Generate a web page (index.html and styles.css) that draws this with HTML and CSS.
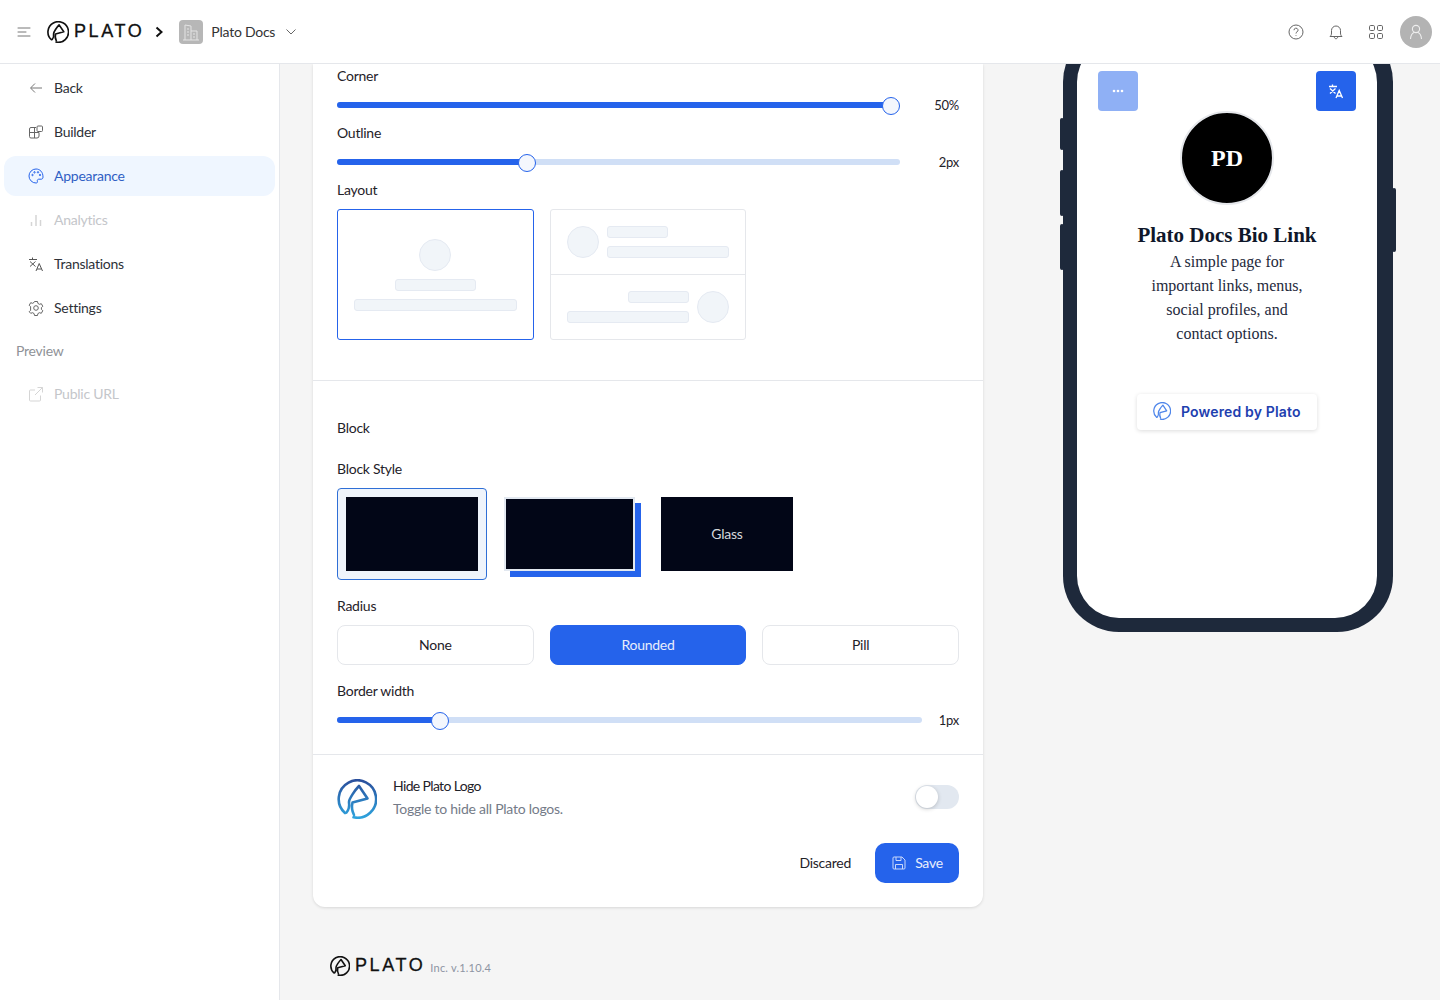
FILE: index.html
```html
<!DOCTYPE html>
<html lang="en">
<head>
  <meta charset="UTF-8">
  <meta name="viewport" content="width=device-width, initial-scale=1.0">
  <title>Plato Docs - Appearance</title>
  <link rel="stylesheet" href="styles.css">
</head>
<body>
  <header class="topbar">
    <svg class="menu-icon" width="14" height="12" viewBox="0 0 14 12" fill="none" stroke="#777" stroke-width="1" stroke-linecap="round"><path d="M1 2h12M1 6h8M1 10h12"/></svg>
    <div class="logo">
      <svg width="22" height="22" viewBox="0 0 40 40" fill="none" stroke="#111" stroke-width="3" stroke-linecap="round" stroke-linejoin="round"><path d="M8 34A18.700 18.700 0 1 1 16.500 38.300"/><path d="M9.500 33.500c2.500-3 3-7 2.500-10.500 0-3 6-12 10-16l8.500 12.500-15 4c-1 4-.5 8.500 1.500 12.500"/></svg>
      <span class="logo-text">PLATO</span>
    </div>
    <svg class="crumb-arrow" width="8" height="12" viewBox="0 0 8 12" fill="none" stroke="#111" stroke-width="2"><path d="M1.500 1.500 6.500 6l-5 4.500"/></svg>
    <div class="org-tile">
      <svg width="16" height="18" viewBox="0 0 16 18" fill="none" stroke="#e4e4e4" stroke-width="1"><path d="M2 17V2l6 1v14M8 8h6v9M0 17h16M4 6h2M4 9h2M4 12h2M10 11h2M10 14h2"/></svg>
    </div>
    <span class="org-name">Plato Docs</span>
    <svg class="org-caret" width="12" height="8" viewBox="0 0 12 8" fill="none" stroke="#666" stroke-width="1"><path d="m1.500 1.500 4.500 4.500 4.500-4.500"/></svg>
    <div class="topbar-right">
      <svg width="16" height="16" viewBox="0 0 16 16" fill="none" stroke="#666" stroke-width="1"><circle cx="8" cy="8" r="7"/><path d="M6 6.200a2 2 0 1 1 3 1.700c-.7.400-1 .8-1 1.600M8 11.300v.7"/></svg>
      <svg width="16" height="16" viewBox="0 0 16 16" fill="none" stroke="#666" stroke-width="1" stroke-linejoin="round"><path d="M2 12.500c1-1 1.500-1.500 1.500-3.500V6.500a4.500 4.500 0 0 1 9 0V9c0 2 .5 2.500 1.500 3.500zM6.300 13c.2 2.300 3.200 2.300 3.400 0"/></svg>
      <svg width="16" height="16" viewBox="0 0 16 16" fill="none" stroke="#666" stroke-width="1"><rect x="1.500" y="1.500" width="5" height="5" rx="1.200"/><rect x="9.500" y="1.500" width="5" height="5" rx="1.200"/><rect x="1.500" y="9.500" width="5" height="5" rx="1.200"/><rect x="9.500" y="9.500" width="5" height="5" rx="1.200"/></svg>
      <div class="avatar">
        <svg width="16" height="16" viewBox="0 0 16 16" fill="none" stroke="#eee" stroke-width="1.100"><circle cx="8" cy="5" r="3.600"/><path d="M2.500 15c.3-4 2.300-6 3.500-6.500M13.500 15c-.3-4-2.300-6-3.500-6.500"/></svg>
      </div>
    </div>
  </header>

  <div class="layout">
    <aside class="sidebar">
      <a class="nav-item">
        <svg width="16" height="16" viewBox="0 0 16 16" fill="none" stroke="#777" stroke-width="1"><path d="M14 8H3M7 3.500 2.500 8 7 12.500"/></svg>
        Back
      </a>
      <a class="nav-item">
        <svg width="16" height="16" viewBox="0 0 16 16" fill="none" stroke="#666" stroke-width="1"><path d="M8 3.500H3A1.500 1.500 0 0 0 1.500 5v7.500A1.500 1.500 0 0 0 3 14h6a2 2 0 0 0 2-2V8.500M1.500 8.500H11M6.500 3.500V14"/><rect x="9" y="2" width="5.500" height="5.500" rx="1"/></svg>
        Builder
      </a>
      <a class="nav-item active">
        <svg width="16" height="16" viewBox="0 0 16 16" fill="none" stroke="#2563eb" stroke-width="1"><path d="M8 1a7 7 0 1 0 0 14c1.300 0 1.700-.8 1.400-1.700-.4-1.100.2-2.100 1.300-2.100h2.600c1 0 1.700-.8 1.700-2.200C15 4 11.900 1 8 1z"/><circle cx="4.500" cy="7" r=".7"/><circle cx="6.500" cy="4.300" r=".7"/><circle cx="10" cy="4.300" r=".7"/><circle cx="12" cy="7" r=".7"/></svg>
        Appearance
      </a>
      <a class="nav-item disabled">
        <svg width="16" height="16" viewBox="0 0 16 16" fill="none" stroke="#d5d5d5" stroke-width="1.500"><path d="M3.500 14V10M8 14V3M12.500 14V8"/></svg>
        Analytics
      </a>
      <a class="nav-item">
        <svg width="16" height="16" viewBox="0 0 16 16" fill="none" stroke="#555" stroke-width="1"><path d="M1 3.500h8M4.500 1.500v2M2 5.500l5.500 5M7.500 5.500l-5.500 5M8 15l3.200-7.500L14.500 15M9 13h4.500"/></svg>
        Translations
      </a>
      <a class="nav-item">
        <svg width="16" height="16" viewBox="0 0 16 16" fill="none" stroke="#666" stroke-width="1" stroke-linejoin="round"><path d="M6.500 1.500h3l.4 1.900 1.500.9 1.900-.6 1.500 2.600-1.400 1.300v1.800l1.400 1.300-1.500 2.600-1.900-.6-1.500.9-.4 1.900h-3l-.4-1.900-1.500-.9-1.900.6L1.200 11.700l1.400-1.300V6.600L1.200 5.300l1.500-2.600 1.900.6 1.500-.9z"/><circle cx="8" cy="8" r="2.300"/></svg>
        Settings
      </a>
      <div class="nav-heading">Preview</div>
      <a class="nav-item disabled">
        <svg width="16" height="16" viewBox="0 0 16 16" fill="none" stroke="#d5d5d5" stroke-width="1"><path d="M12.500 9.500V14a1 1 0 0 1-1 1H2.500a1 1 0 0 1-1-1V5a1 1 0 0 1 1-1h4.500M9.500 1.500h5v5M14.500 1.500 7 9"/></svg>
        Public URL
      </a>
    </aside>

    <main class="content">
      <div class="column">
        <section class="card">
          <div class="card-section section-top">
            <div class="field-label">Corner</div>
            <div class="slider-row">
              <div class="track"><div class="track-fill" style="width: 98.400%"></div></div>
              <span class="slider-value">50%</span>
            </div>
            <div class="field-label">Outline</div>
            <div class="slider-row">
              <div class="track"><div class="track-fill" style="width: 33.800%"></div></div>
              <span class="slider-value">2px</span>
            </div>
            <div class="field-label">Layout</div>
            <div class="three-up">
              <div class="layout-tile selected">
                <div class="center-preview">
                  <div class="ghost-circle"></div>
                  <div class="ghost-bar short"></div>
                  <div class="ghost-bar long"></div>
                </div>
              </div>
              <div class="layout-tile split">
                <div class="split-row">
                  <div class="ghost-circle"></div>
                  <div class="ghost-lines">
                    <div class="ghost-bar half"></div>
                    <div class="ghost-bar"></div>
                  </div>
                </div>
                <div class="split-row reverse">
                  <div class="ghost-lines end">
                    <div class="ghost-bar half"></div>
                    <div class="ghost-bar"></div>
                  </div>
                  <div class="ghost-circle"></div>
                </div>
              </div>
            </div>
          </div>

          <div class="card-section section-block">
            <div class="section-title">Block</div>
            <div class="field-label style-label">Block Style</div>
            <div class="block-styles">
              <div class="block-option selected"><div class="block-sample"></div></div>
              <div class="block-option offset"><div class="block-sample hard-shadow"></div></div>
              <div class="block-option"><div class="block-sample">Glass</div></div>
            </div>
            <div class="field-label">Radius</div>
            <div class="three-up">
              <button class="radius-btn">None</button>
              <button class="radius-btn active">Rounded</button>
              <button class="radius-btn">Pill</button>
            </div>
            <div class="field-label">Border width</div>
            <div class="slider-row wide">
              <div class="track"><div class="track-fill" style="width: 17.600%"></div></div>
              <span class="slider-value">1px</span>
            </div>
          </div>

          <div class="card-section section-foot">
            <div class="hide-row">
              <svg class="hide-logo" width="40" height="40" viewBox="0 0 40 40" fill="none" stroke="url(#plato-grad)" stroke-width="2.600" stroke-linecap="round" stroke-linejoin="round">
                <defs>
                  <linearGradient id="plato-grad" gradientUnits="userSpaceOnUse" x1="20" y1="1" x2="20" y2="39">
                    <stop offset="0" stop-color="#2a4f9c"/>
                    <stop offset="1" stop-color="#2ea3dd"/>
                  </linearGradient>
                </defs>
                <path d="M8 34A18.700 18.700 0 1 1 16.500 38.300"/>
                <path d="M9.500 33.500c2.500-3 3-7 2.500-10.500 0-3 6-12 10-16l8.500 12.500-15 4c-1 4-.5 8.500 1.500 12.500"/>
              </svg>
              <div class="hide-text">
                <div class="hide-title">Hide Plato Logo</div>
                <div class="hide-sub">Toggle to hide all Plato logos.</div>
              </div>
              <div class="toggle"><div class="toggle-knob"></div></div>
            </div>
            <div class="actions">
              <button class="discard-btn">Discared</button>
              <button class="save-btn">
                <svg width="16" height="16" viewBox="0 0 16 16" fill="none" stroke="#c9d8fa" stroke-width="1"><path d="M2 3a1 1 0 0 1 1-1h8l3 3v8a1 1 0 0 1-1 1H3a1 1 0 0 1-1-1z"/><path d="M5 2v3.500h5V2M4.500 14V9.500h7V14"/></svg>
                Save
              </button>
            </div>
          </div>
        </section>

        <footer class="page-foot">
          <div class="logo small">
            <svg width="20" height="20" viewBox="0 0 40 40" fill="none" stroke="#111" stroke-width="3.200" stroke-linecap="round" stroke-linejoin="round"><path d="M8 34A18.700 18.700 0 1 1 16.500 38.300"/><path d="M9.500 33.500c2.500-3 3-7 2.500-10.500 0-3 6-12 10-16l8.500 12.500-15 4c-1 4-.5 8.500 1.500 12.500"/></svg>
            <span class="logo-text">PLATO</span>
          </div>
          <span class="version">Inc. v.1.10.4</span>
        </footer>
      </div>

      <div class="phone">
        <span class="phone-key key-a"></span>
        <span class="phone-key key-b"></span>
        <span class="phone-key key-c"></span>
        <span class="phone-key key-d"></span>
        <div class="screen">
          <div class="screen-actions">
            <div class="screen-btn faded">
              <svg width="14" height="4" viewBox="0 0 14 4" fill="#fff"><circle cx="3" cy="2" r="1.300"/><circle cx="7" cy="2" r="1.300"/><circle cx="11" cy="2" r="1.300"/></svg>
            </div>
            <div class="screen-btn">
              <svg width="16" height="16" viewBox="0 0 16 16" fill="none" stroke="#fff" stroke-width="1.300"><path d="M1 3.500h8M4.500 1.500v2M2 5.500l5.500 5M7.500 5.500l-5.500 5M8 15l3.200-7.500L14.500 15M9 13h4.500"/></svg>
            </div>
          </div>
          <div class="bio-avatar">PD</div>
          <div class="bio-title">Plato Docs Bio Link</div>
          <p class="bio-text">A simple page for important links, menus, social profiles, and contact options.</p>
          <div class="powered">
            <svg width="18" height="18" viewBox="0 0 40 40" fill="none" stroke="#4f86ea" stroke-width="2.800" stroke-linecap="round" stroke-linejoin="round"><path d="M8 34A18.700 18.700 0 1 1 16.500 38.300"/><path d="M9.500 33.500c2.500-3 3-7 2.500-10.500 0-3 6-12 10-16l8.500 12.500-15 4c-1 4-.5 8.500 1.500 12.500"/></svg>
            Powered by Plato
          </div>
        </div>
      </div>
    </main>
  </div>
</body>
</html>
```

FILE: styles.css
```css
* {
  box-sizing: border-box;
}

body {
  margin: 0;
  height: 100vh;
  overflow: hidden;
  display: flex;
  flex-direction: column;
  font-family: Lato, Arial, sans-serif;
  font-size: 14px;
  letter-spacing: -0.25px;
  color: #1f2229;
  background-color: #f5f5f5;
}

.topbar {
  position: relative;
  z-index: 5;
  display: flex;
  align-items: center;
  flex: 0 0 64px;
  padding: 0 8px 0 17px;
  background: #ffffff;
  border-bottom: 1px solid #e5e7eb;
}

.logo {
  display: flex;
  align-items: center;
  color: #111111;
}

.topbar .logo {
  margin-left: 16px;
}

.logo-text {
  margin-left: 5px;
  font-family: "Liberation Sans", Arial, sans-serif;
  font-size: 18px;
  font-weight: 400;
  letter-spacing: 2.600px;
  -webkit-text-stroke: 0.3px #111111;
}

.crumb-arrow {
  margin-left: 11px;
}

.org-tile {
  display: flex;
  align-items: center;
  justify-content: center;
  width: 24px;
  height: 24px;
  margin-left: 16px;
  border-radius: 4px;
  background: #b7b7b7;
}

.org-name {
  margin-left: 8px;
  color: #333333;
}

.org-caret {
  margin-left: 10px;
}

.topbar-right {
  display: flex;
  align-items: center;
  gap: 24px;
  margin-left: auto;
}

.avatar {
  display: flex;
  align-items: center;
  justify-content: center;
  width: 32px;
  height: 32px;
  margin-left: -8px;
  border-radius: 50%;
  background: #b3b3b3;
}

.layout {
  display: flex;
  flex: 1;
  min-height: 0;
}

.sidebar {
  flex: 0 0 280px;
  padding-top: 4px;
  background: #ffffff;
  border-right: 1px solid #e5e7eb;
}

.nav-item {
  display: flex;
  align-items: center;
  gap: 10px;
  height: 40px;
  margin: 0 4px 4px;
  padding: 0 0 2px 24px;
  border-radius: 12px;
  color: #2e3138;
}

.nav-item svg {
  margin-top: 2px;
}

.nav-item.active {
  background: #eff6ff;
  color: #2f5fc4;
}

.nav-item.disabled {
  color: #c4c6ca;
}

.nav-heading {
  margin: 13px 0 13px 16px;
  line-height: 20px;
  color: #8f9297;
}

.content {
  display: flex;
  align-items: flex-start;
  flex: 1;
  min-width: 0;
  padding-left: 33px;
  overflow: hidden;
}

.column {
  flex: 0 0 670px;
}

.card {
  background: #ffffff;
  border-radius: 0 0 12px 12px;
  box-shadow: 0 1px 3px rgba(0, 0, 0, 0.12);
}

.card-section {
  padding: 0 24px;
  border-bottom: 1px solid #e5e7eb;
}

.section-top {
  padding-top: 2px;
  padding-bottom: 40px;
}

.section-block {
  padding-top: 37px;
  padding-bottom: 26px;
}

.section-foot {
  padding-top: 24px;
  padding-bottom: 24px;
  border-bottom: none;
}

.field-label,
.section-title {
  line-height: 20px;
}

.field-label {
  margin-top: 10px;
  margin-bottom: 9px;
}

.section-top .field-label:first-child {
  margin-top: 0;
}

.style-label {
  margin-top: 21px;
}

.section-block .three-up + .field-label,
.block-styles + .field-label {
  margin-top: 16px;
}

.slider-row {
  display: flex;
  align-items: center;
  height: 16px;
  margin-top: 11px;
}

.track {
  position: relative;
  flex: 1;
  height: 6px;
  border-radius: 3px;
  background: #d0dff6;
}

.track-fill {
  position: relative;
  height: 100%;
  border-radius: 3px;
  background: #2563eb;
}

.track-fill::after {
  content: "";
  position: absolute;
  top: -5px;
  right: -9px;
  width: 16px;
  height: 16px;
  border: 1px solid #2563eb;
  border-radius: 50%;
  background: #f4f7fd;
}

.slider-value {
  flex: 0 0 59px;
  text-align: right;
  font-size: 13px;
}

.wide .slider-value {
  flex-basis: 37px;
}

.three-up {
  display: grid;
  grid-template-columns: repeat(3, 1fr);
  gap: 16px;
}

.layout-tile {
  height: 131px;
  border: 1px solid #e5e7eb;
  border-radius: 3px;
}

.layout-tile.selected {
  border-color: #2563eb;
}

.center-preview {
  display: flex;
  flex-direction: column;
  align-items: center;
  justify-content: center;
  gap: 8px;
  height: 100%;
}

.ghost-circle {
  flex: 0 0 32px;
  width: 32px;
  height: 32px;
  border: 1px solid #e5eaf2;
  border-radius: 50%;
  background: #f1f5f9;
}

.ghost-bar {
  height: 12px;
  border: 1px solid #e5eaf2;
  border-radius: 3px;
  background: #f1f5f9;
}

.ghost-bar.short {
  width: 81px;
}

.ghost-bar.long {
  width: 163px;
}

.ghost-bar.half {
  width: 61px;
}

.split-row {
  display: flex;
  gap: 8px;
  height: 65px;
  padding: 16px;
}

.split-row:first-child {
  border-bottom: 1px solid #e5e7eb;
}

.ghost-lines {
  display: flex;
  flex-direction: column;
  gap: 8px;
  flex: 1;
}

.ghost-lines.end {
  align-items: flex-end;
}

.ghost-lines.end .ghost-bar {
  width: 122px;
}

.ghost-lines.end .ghost-bar.half {
  width: 61px;
}

.block-styles {
  display: flex;
  gap: 8px;
}

.block-option {
  flex: 0 0 150px;
  height: 92px;
  padding: 8px;
  border: 1px solid transparent;
  border-radius: 4px;
}

.block-option.offset {
  flex-basis: 149px;
}

.block-option.selected {
  border-color: #2f6fd6;
  background: #eff4fb;
}

.block-sample {
  display: flex;
  align-items: center;
  justify-content: center;
  height: 100%;
  padding-bottom: 2px;
  background: #020617;
  color: #d5d7dc;
}

.hard-shadow {
  border: 2px solid #e2e8f0;
  box-shadow: 6px 6px 0 #2563eb;
}

.radius-btn {
  height: 40px;
  padding: 0 0 2px;
  border: 1px solid #e5e7eb;
  border-radius: 8px;
  background: #ffffff;
  color: #1f2229;
  font: inherit;
  letter-spacing: inherit;
}

.radius-btn.active {
  border-color: #2563eb;
  background: #2563eb;
  color: #e8eefc;
}

.hide-row {
  display: flex;
  align-items: flex-start;
}

.hide-logo {
  flex: 0 0 40px;
}

.hide-text {
  flex: 1;
  margin-left: 16px;
}

.hide-title {
  margin-top: -3px;
  line-height: 20px;
  letter-spacing: -0.650px;
}

.hide-sub {
  margin-top: 3px;
  line-height: 20px;
  color: #747b88;
}

.toggle {
  position: relative;
  flex: 0 0 44px;
  height: 24px;
  margin-top: 6px;
  border-radius: 12px;
  background: #e2e8f0;
}

.toggle-knob {
  position: absolute;
  top: 1px;
  left: 1px;
  width: 22px;
  height: 22px;
  border-radius: 50%;
  background: #ffffff;
  box-shadow: 0 1px 4px rgba(0, 0, 0, 0.2);
}

.actions {
  display: flex;
  align-items: center;
  justify-content: flex-end;
  gap: 24px;
  margin-top: 24px;
}

.discard-btn {
  padding: 0 0 2px;
  border: none;
  background: none;
  color: #1f2229;
  font: inherit;
  letter-spacing: inherit;
}

.save-btn {
  display: flex;
  align-items: center;
  justify-content: center;
  gap: 8px;
  width: 84px;
  height: 40px;
  padding: 0 0 2px;
  border: none;
  border-radius: 10px;
  background: #2563eb;
  color: #e8eefc;
  font: inherit;
  letter-spacing: inherit;
}

.save-btn svg {
  margin-top: 2px;
}

.page-foot {
  display: flex;
  align-items: flex-end;
  gap: 5px;
  margin-top: 48px;
  padding-left: 17px;
}

.version {
  margin-bottom: 2px;
  font-size: 11px;
  letter-spacing: 0.2px;
  color: #8d94a3;
}

.phone {
  position: relative;
  flex: 0 0 330px;
  height: 606px;
  margin: -38px 0 0 80px;
  padding: 14px 16px 14px 14px;
  border-radius: 56px;
  background: #1e293b;
}

.phone-key {
  position: absolute;
  width: 4px;
  background: #1e293b;
  border-radius: 2px;
}

.key-a {
  top: 92px;
  left: -3px;
  height: 32px;
}

.key-b {
  top: 144px;
  left: -3px;
  height: 46px;
}

.key-c {
  top: 198px;
  left: -3px;
  height: 46px;
}

.key-d {
  top: 162px;
  right: -3px;
  height: 64px;
}

.screen {
  display: flex;
  flex-direction: column;
  align-items: center;
  height: 100%;
  padding-top: 31px;
  border-radius: 42px;
  background: #ffffff;
  font-family: "Liberation Serif", "Times New Roman", serif;
  letter-spacing: 0;
}

.screen-actions {
  display: flex;
  justify-content: space-between;
  width: 100%;
  padding: 0 21px;
}

.screen-btn {
  display: flex;
  align-items: center;
  justify-content: center;
  width: 40px;
  height: 40px;
  border-radius: 4px;
  background: #2563eb;
}

.screen-btn.faded {
  background: #8fb0f5;
}

.bio-avatar {
  display: flex;
  align-items: center;
  justify-content: center;
  width: 94px;
  height: 94px;
  border: 2px solid #e5e7eb;
  border-radius: 50%;
  background: #000000;
  color: #ffffff;
  font-size: 24px;
  font-weight: 700;
}

.bio-title {
  margin-top: 18px;
  line-height: 24px;
  font-size: 21px;
  font-weight: 700;
  color: #0f172a;
}

.bio-text {
  width: 168px;
  margin: 3px 0 0;
  line-height: 24px;
  font-size: 16px;
  text-align: center;
  color: #1e293b;
}

.powered {
  display: flex;
  align-items: center;
  gap: 10px;
  width: 180px;
  height: 36px;
  margin-top: 48px;
  padding: 0 0 2px 16px;
  border-radius: 4px;
  background: #ffffff;
  box-shadow: 0 1px 4px rgba(0, 0, 0, 0.14);
  font-family: Inter, Arial, sans-serif;
  font-size: 14px;
  font-weight: 600;
  letter-spacing: 0.15px;
  color: #1e40af;
}
```
